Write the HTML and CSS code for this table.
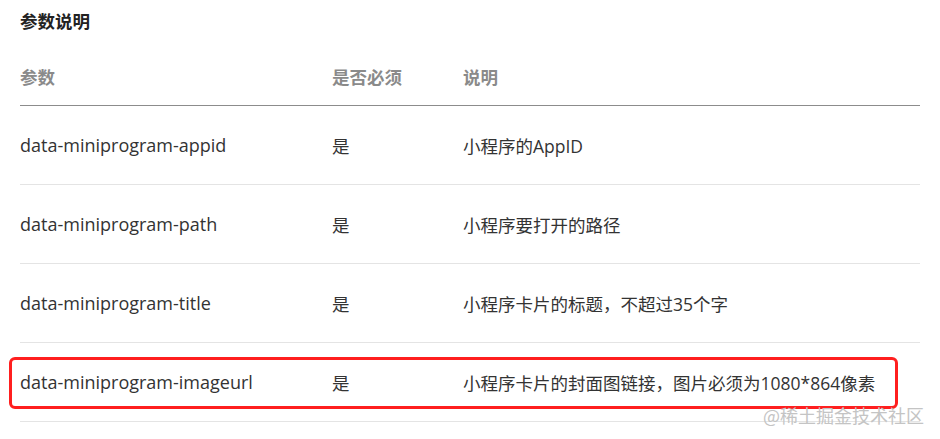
FILE: index.html
```html
<!DOCTYPE html>
<html lang="zh">
<head>
<meta charset="utf-8">
<link rel="stylesheet" href="styles.css">
</head>
<body>
<div class="page">
  <h3 class="title">参数说明</h3>
  <div class="table">
    <div class="row head">
      <div class="c1">参数</div><div class="c2">是否必须</div><div class="c3">说明</div>
    </div>
    <div class="row">
      <div class="c1">data-miniprogram-appid</div><div class="c2">是</div><div class="c3">小程序的AppID</div>
    </div>
    <div class="row">
      <div class="c1">data-miniprogram-path</div><div class="c2">是</div><div class="c3">小程序要打开的路径</div>
    </div>
    <div class="row">
      <div class="c1">data-miniprogram-title</div><div class="c2">是</div><div class="c3">小程序卡片的标题，不超过35个字</div>
    </div>
    <div class="row hl">
      <div class="c1">data-miniprogram-imageurl</div><div class="c2">是</div><div class="c3">小程序卡片的封面图链接，图片必须为1080*864像素</div>
      <div class="mark"></div>
    </div>
  </div>
  <div class="wm">@稀土掘金技术社区</div>
</div>
</body>
</html>
```
FILE: styles.css
```css
html, body { margin: 0; padding: 0; background: #fff; }
body { width: 940px; height: 439px; overflow: hidden; font-family: "Open Sans", "Noto Sans CJK SC", sans-serif; color: #333; }
.page { position: relative; padding: 0 20px; }
.title { margin: 0; padding-top: 10px; font-size: 17.5px; font-weight: 700; color: #222; line-height: 22px; font-family: "Noto Sans CJK SC", sans-serif; }
.table { margin-top: 26px; }
.row { position: relative; display: grid; grid-template-columns: 312px 131px 1fr; align-items: center; height: 78px; border-bottom: 1px solid #e4e4e4; font-size: 18px; }
.row.head { height: 47px; border-bottom: 1px solid #8c8c8c; align-items: start; font-weight: 700; color: #8a8a8a; font-size: 17.5px; font-family: "Noto Sans CJK SC", sans-serif; }
.row.head div { line-height: 22px; margin-top: 8px; }
.row .c2, .row .c3 { font-size: 17.5px; }
.mark { position: absolute; left: -11px; right: 22px; top: 14px; height: 46px; border: 3.5px solid #ff1f1f; border-radius: 6px; }
.wm { position: absolute; left: 763px; top: 402px; font-size: 18px; color: #c4c4c4; font-family: "Noto Sans CJK SC", sans-serif; }
```
